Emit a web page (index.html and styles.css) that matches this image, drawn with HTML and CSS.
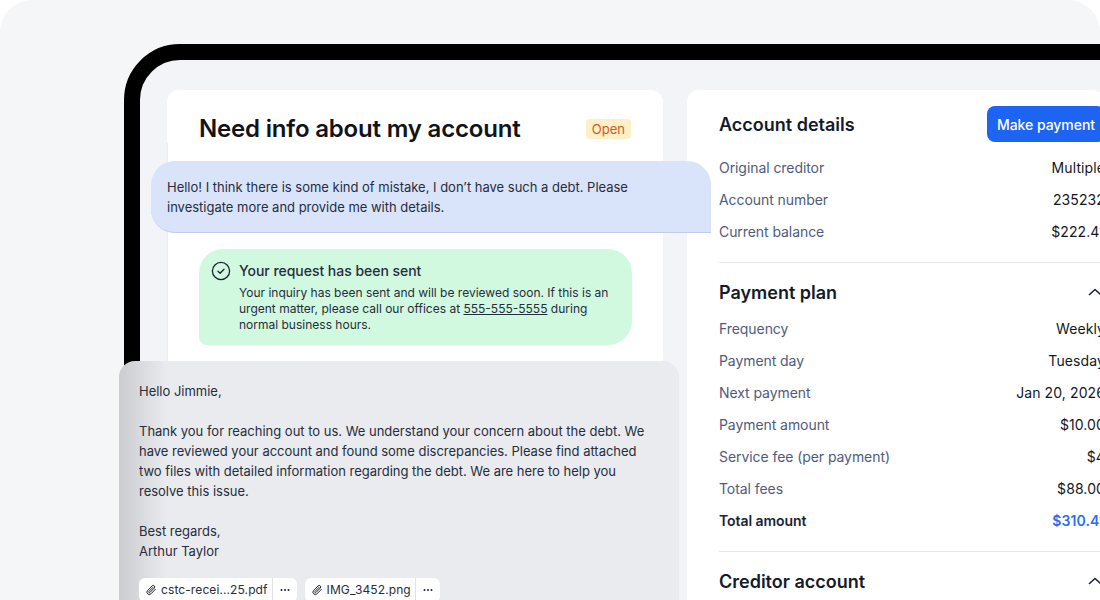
FILE: index.html
```html
<!DOCTYPE html>
<html lang="en">
<head>
    <meta charset="UTF-8">
    <title>Need info about my account</title>
    <link rel="stylesheet" href="styles.css">
</head>
<body>

<div class="stage">
    <div class="device">
        <div class="screen">

            <section class="ticket">
                <div class="ticket-head">
                    <h1>Need info about my account</h1>
                    <span class="badge">Open</span>
                </div>
                <div class="ticket-body">
                    <div class="notice">
                        <svg class="notice-icon" width="20" height="20" viewBox="0 0 20 20" fill="none" stroke="#1b2333" stroke-width="1.3" stroke-linecap="round" stroke-linejoin="round">
                            <circle cx="10" cy="10" r="8.6"/>
                            <path d="M7 10.2l2.1 2 3.9-4"/>
                        </svg>
                        <div>
                            <h3>Your request has been sent</h3>
                            <p>Your inquiry has been sent and will be reviewed soon. If this is an urgent matter, please call our offices at <u>555-555-5555</u> during normal business hours.</p>
                        </div>
                    </div>
                </div>
            </section>

            <section class="details">
                <div class="details-head">
                    <h2>Account details</h2>
                    <button class="pay">Make payment</button>
                </div>
                <div class="rows">
                    <div class="row"><span>Original creditor</span><b>Multiple</b></div>
                    <div class="row"><span>Account number</span><b>235232</b></div>
                    <div class="row"><span>Current balance</span><b>$222.41</b></div>
                </div>

                <div class="section">
                    <div class="section-head">
                        <h2>Payment plan</h2>
                        <svg class="chev" width="14" height="8" viewBox="0 0 14 8" fill="none" stroke="#1b2333" stroke-width="1.6" stroke-linecap="round" stroke-linejoin="round"><path d="M1.5 6.5L7 1.5l5.5 5"/></svg>
                    </div>
                    <div class="rows">
                        <div class="row"><span>Frequency</span><b>Weekly</b></div>
                        <div class="row"><span>Payment day</span><b>Tuesday</b></div>
                        <div class="row"><span>Next payment</span><b>Jan 20, 2026</b></div>
                        <div class="row"><span>Payment amount</span><b>$10.00</b></div>
                        <div class="row"><span>Service fee (per payment)</span><b>$4</b></div>
                        <div class="row"><span>Total fees</span><b>$88.00</b></div>
                        <div class="row total"><span>Total amount</span><b>$310.41</b></div>
                    </div>
                </div>

                <div class="section">
                    <div class="section-head">
                        <h2>Creditor account</h2>
                        <svg class="chev" width="14" height="8" viewBox="0 0 14 8" fill="none" stroke="#1b2333" stroke-width="1.6" stroke-linecap="round" stroke-linejoin="round"><path d="M1.5 6.5L7 1.5l5.5 5"/></svg>
                    </div>
                </div>
            </section>

        </div>
    </div>

    <!-- these two sit on top of the cards -->
    <div class="bubble bubble-out">
        Hello! I think there is some kind of mistake, I don’t have such a debt. Please investigate more and provide me with details.
    </div>

    <div class="bubble bubble-in">
        <p>Hello Jimmie,</p>
        <p>Thank you for reaching out to us. We understand your concern about the debt. We have reviewed your account and found some discrepancies. Please find attached two files with detailed information regarding the debt. We are here to help you resolve this issue.</p>
        <p>Best regards,<br>Arthur Taylor</p>
        <div class="files">
            <div class="file">
                <span class="file-name">
                    <svg width="12" height="12" viewBox="0 0 12 12" fill="none" stroke="#1b2333" stroke-width="1" stroke-linecap="round" stroke-linejoin="round"><path d="M10.3 5.4L6 9.8a2.3 2.3 0 0 1-3.4-3.3l4.5-4.6a1.5 1.5 0 0 1 2.2 2.1L4.9 8.5a.7.7 0 0 1-1-1l4-4.1"/></svg>
                    cstc-recei...25.pdf
                </span>
                <span class="file-more">
                    <svg width="10" height="4" viewBox="0 0 10 4" fill="#1b2333"><circle cx="1.5" cy="2" r="1"/><circle cx="5" cy="2" r="1"/><circle cx="8.5" cy="2" r="1"/></svg>
                </span>
            </div>
            <div class="file">
                <span class="file-name">
                    <svg width="12" height="12" viewBox="0 0 12 12" fill="none" stroke="#1b2333" stroke-width="1" stroke-linecap="round" stroke-linejoin="round"><path d="M10.3 5.4L6 9.8a2.3 2.3 0 0 1-3.4-3.3l4.5-4.6a1.5 1.5 0 0 1 2.2 2.1L4.9 8.5a.7.7 0 0 1-1-1l4-4.1"/></svg>
                    IMG_3452.png
                </span>
                <span class="file-more">
                    <svg width="10" height="4" viewBox="0 0 10 4" fill="#1b2333"><circle cx="1.5" cy="2" r="1"/><circle cx="5" cy="2" r="1"/><circle cx="8.5" cy="2" r="1"/></svg>
                </span>
            </div>
        </div>
    </div>
</div>

</body>
</html>
```

FILE: styles.css
```css
* {
    box-sizing: border-box;
}
html, body {
    margin: 0;
    height: 100%;
    background-color: #fff;
}
body {
    font-family: Inter, 'Noto Sans', sans-serif;
    color: #262d3e;
    overflow: hidden;
}
h1, h2, h3, p {
    margin: 0;
}
.stage {
    position: relative;
    width: 1100px;
    height: 600px;
    padding: 44px 0 0 124px;
    background-color: #f5f6f8;
    border-radius: 32px 32px 0 0;
    overflow: hidden;
}
.device {
    width: 1100px;
    height: 700px;
    border: 16px solid #000;
    border-radius: 56px;
    background-color: #f2f4f8;
}
.screen {
    display: grid;
    grid-template-columns: 496px 418px;
    column-gap: 24px;
    padding: 30px 0 0 27px;
}
.ticket {
    height: 600px;
    background-color: #fff;
    border-radius: 12px;
}
.ticket-head {
    display: flex;
    justify-content: space-between;
    align-items: center;
    height: 53px;
    padding: 25px 32px 0 32px;
}
h1 {
    font-size: 24px;
    line-height: 36px;
    font-weight: 600;
    color: #111318;
    letter-spacing: -0.18px;
}
.badge {
    height: 20px;
    padding: 0 6px;
    font-size: 13px;
    line-height: 20px;
    color: #cf5a1f;
    background-color: #fdf0c8;
    border-radius: 4px;
}
.ticket-body {
    height: 547px;
    padding: 106px 31px 0 31px;
    border-left: 1px solid #eceef2;
}
.notice {
    display: flex;
    gap: 8px;
    height: 96px;
    padding: 12px 20px 0 12px;
    background-color: #d1f9df;
    border-radius: 24px 24px 24px 8px;
}
.notice h3 {
    font-size: 14px;
    line-height: 20px;
    font-weight: 500;
    letter-spacing: -0.03px;
}
.notice p {
    margin-top: 4px;
    font-size: 12px;
    line-height: 16px;
}
.notice-icon {
    flex-shrink: 0;
}
.details {
    height: 600px;
    padding: 16px 0 0 32px;
    background-color: #fff;
    border-radius: 12px;
}
.details-head, .section-head {
    display: flex;
    justify-content: space-between;
    align-items: center;
}
.details-head h2 {
    margin-top: 1px;
}
h2 {
    font-size: 18px;
    font-weight: 600;
    color: #131a2a;
}
.pay {
    height: 36px;
    padding: 0 10px;
    font: 500 14px Inter, sans-serif;
    letter-spacing: -0.05px;
    color: #fff;
    background-color: #1d64f2;
    border: none;
    border-radius: 8px;
}
.rows {
    display: flex;
    flex-direction: column;
    margin-top: 10px;
}
.section .rows {
    margin-top: 8px;
}
.row {
    display: flex;
    justify-content: space-between;
    height: 32px;
    font-size: 14px;
    line-height: 32px;
    color: #4f5b7c;
}
.row span {
    letter-spacing: -0.07px;
}
.row b {
    font-weight: 400;
    color: #14171f;
    letter-spacing: 0.1px;
}
.total span {
    font-weight: 600;
    color: #1b2333;
}
.total b {
    font-weight: 600;
    color: #2b6ef5;
}
.section {
    margin-top: 14px;
    padding-top: 16px;
    border-top: 1px solid #e4e6ec;
}
.section-head {
    height: 26px;
}
.chev {
    margin-right: 3px;
}
.bubble {
    position: absolute;
    width: 560px;
    font-size: 13px;
    line-height: 20px;
    letter-spacing: -0.01px;
}
.bubble-out {
    left: 151px;
    top: 161px;
    height: 72px;
    padding: 16px 40px 0 16px;
    background-color: #d9e4fb;
    border-bottom: 1px solid #bfcde8;
    border-radius: 24px 24px 0 24px;
}
.bubble-in {
    left: 119px;
    top: 361px;
    height: 260px;
    padding: 20px 20px 0 20px;
    background: linear-gradient(to right, #cbccd0, #e9ebee 48px);
    border-radius: 16px;
}
.bubble-in p {
    margin-bottom: 20px;
}
.files {
    display: flex;
    gap: 8px;
    margin-top: -3px;
}
.file {
    display: flex;
    height: 24px;
    font-size: 12px;
    line-height: 24px;
    letter-spacing: 0.1px;
    background-color: #fff;
    border-radius: 6px;
}
.file-name {
    display: flex;
    align-items: center;
    gap: 4px;
    padding: 0 4px 0 6px;
}
.file-more {
    display: flex;
    justify-content: center;
    align-items: center;
    width: 25px;
    border-left: 1px solid #dfe1e6;
}
```
